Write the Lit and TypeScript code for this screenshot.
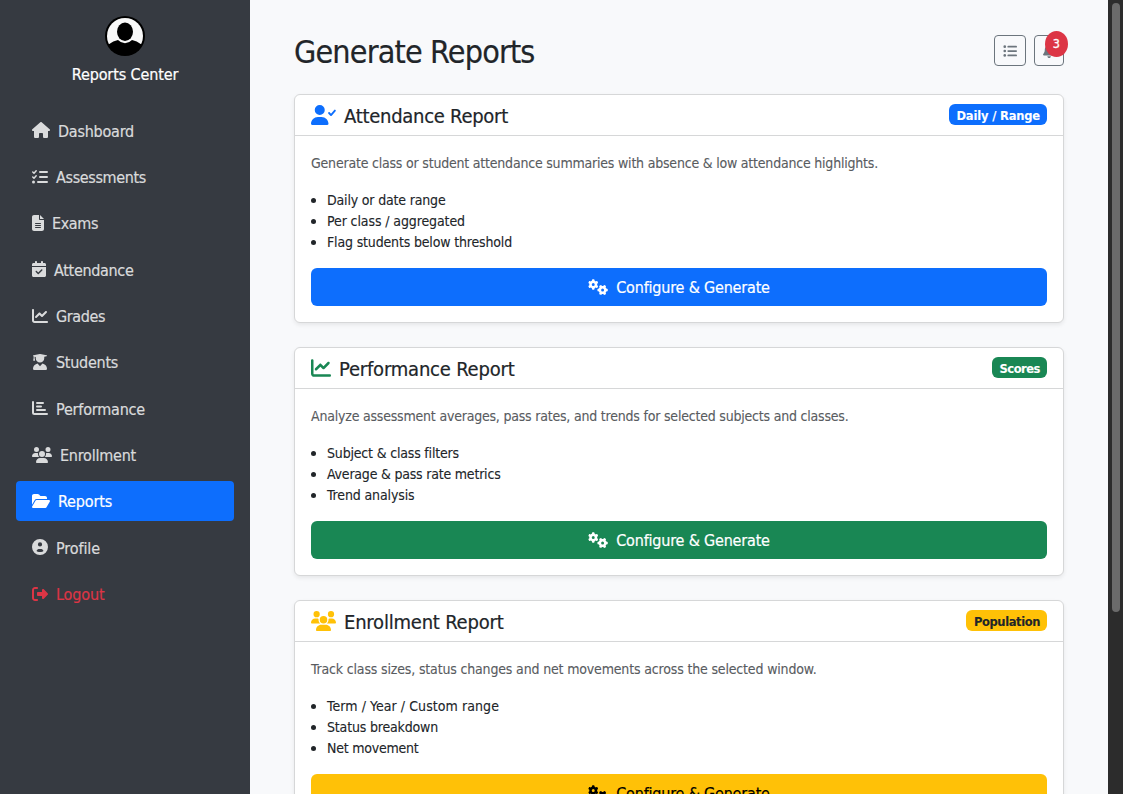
import { LitElement, html, css, svg } from "lit";
import { customElement, property } from "lit/decorators.js";

const GEAR =
  "M308.5 135.3c7.1-6.3 9.9-16.2 6.2-25c-2.3-5.3-4.8-10.5-7.6-15.5L304 89.4c-3-5-6.3-9.9-9.8-14.6c-5.7-7.6-15.7-10.1-24.7-7.1l-28.2 9.3c-10.7-8.8-23-16-36.2-20.9L199 27.1c-1.9-9.3-9.1-16.7-18.5-17.8C173.9 8.4 167.2 8 160.4 8h-.7c-6.8 0-13.5 .4-20.1 1.2c-9.4 1.1-16.6 8.6-18.5 17.8L115 56.1c-13.3 5-25.5 12.1-36.2 20.9L50.5 67.8c-9-3-19-.5-24.7 7.1c-3.5 4.7-6.8 9.6-9.9 14.6l-3 5.3c-2.8 5-5.3 10.2-7.6 15.6c-3.7 8.7-.9 18.6 6.2 25l22.2 19.8C32.6 161.9 32 168.9 32 176s.6 14.1 1.7 20.9L11.5 216.7c-7.1 6.3-9.9 16.2-6.2 25c2.3 5.3 4.8 10.5 7.6 15.6l3 5.2c3 5.1 6.3 9.9 9.9 14.6c5.7 7.6 15.7 10.1 24.7 7.1l28.2-9.3c10.7 8.8 23 16 36.2 20.9l6.1 29.1c1.9 9.3 9.1 16.7 18.5 17.8c6.7 .8 13.5 1.2 20.4 1.2s13.7-.4 20.4-1.2c9.4-1.1 16.6-8.6 18.5-17.8l6.1-29.1c13.3-5 25.5-12.1 36.2-20.9l28.2 9.3c9 3 19 .5 24.7-7.1c3.5-4.7 6.8-9.5 9.8-14.6l3.1-5.4c2.8-5 5.3-10.2 7.6-15.5c3.7-8.7 .9-18.6-6.2-25l-22.2-19.8c1.1-6.8 1.7-13.8 1.7-20.9s-.6-14.1-1.7-20.9l22.2-19.8zM112 176a48 48 0 1 1 96 0 48 48 0 1 1 -96 0z";

// Each icon: [viewBox width, shapes]; every viewBox is 512 units tall.
const ICONS: Record<string, [number, unknown]> = {
  house: [576, svg`<path d="M575.8 255.5c0 18-15 32.1-32 32.1h-32l.7 160.2c0 2.7-.2 5.4-.5 8.1V472c0 22.1-17.9 40-40 40H392c-22.1 0-40-17.9-40-40V384c0-17.7-14.3-32-32-32H256c-17.7 0-32 14.3-32 32v88c0 22.1-17.9 40-40 40H104c-22.1 0-40-17.9-40-40V287.6H32c-18 0-32-14-32-32.1c0-9 3-17 10-24L266.4 8c7-7 15-8 22-8s15 2 21 7L564.8 231.5c8 7 12 15 11 24z"/>`],
  tasks: [512, svg`<g fill="none" stroke="currentColor" stroke-linecap="round" stroke-linejoin="round"><path stroke-width="48" d="M24 96l40 38 70-78M24 256l40 38 70-78"/><path stroke-width="64" d="M256 96h224M256 256h224M192 416h288"/></g><circle cx="48" cy="416" r="48"/>`],
  file: [384, svg`<path d="M64 0C28.7 0 0 28.7 0 64V448c0 35.3 28.7 64 64 64H320c35.3 0 64-28.7 64-64V160H256c-17.7 0-32-14.3-32-32V0H64zM256 0V128H384L256 0zM112 256H272a16 16 0 0 1 0 32H112a16 16 0 0 1 0-32zm0 64H272a16 16 0 0 1 0 32H112a16 16 0 0 1 0-32zm0 64H272a16 16 0 0 1 0 32H112a16 16 0 0 1 0-32z" fill-rule="evenodd"/>`],
  calendar: [448, svg`<path d="M128 0c17.7 0 32 14.3 32 32V64H288V32c0-17.7 14.3-32 32-32s32 14.3 32 32V64h48c26.5 0 48 21.5 48 48v48H0V112C0 85.5 21.5 64 48 64H96V32c0-17.7 14.3-32 32-32zM0 192H448V464c0 26.5-21.5 48-48 48H48c-26.5 0-48-21.5-48-48V192zM329 305c9.4-9.4 9.4-24.6 0-33.9s-24.6-9.4-33.9 0l-95 95-47-47c-9.4-9.4-24.6-9.4-33.9 0s-9.4 24.6 0 33.9l64 64c9.4 9.4 24.6 9.4 33.9 0L329 305z"/>`],
  line: [512, svg`<path d="M64 64c0-17.7-14.3-32-32-32S0 46.3 0 64V400c0 44.2 35.8 80 80 80H480c17.7 0 32-14.3 32-32s-14.3-32-32-32H80c-8.8 0-16-7.2-16-16V64zm406.6 86.6c12.5-12.5 12.5-32.8 0-45.3s-32.8-12.5-45.3 0L320 210.7l-57.4-57.4c-12.5-12.5-32.8-12.5-45.3 0l-112 112c-12.5 12.5-12.5 32.8 0 45.3s32.8 12.5 45.3 0L240 221.3l57.4 57.4c12.5 12.5 32.8 12.5 45.3 0l128-128z"/>`],
  graduate: [512, svg`<path d="M246 2q10-3 20 0L464 40q18 5 18 16t-18 16l-72 16v48a136 136 0 0 1-272 0V92L84 84v44l14 70c2 8-3 14-10 14H48c-7 0-12-6-10-14l14-70V76q-22-6-22-18t20-18zM160 308q14-6 24 4l72 80 72-80q10-10 24-4c75 18 128 84 128 164q0 40-40 40H72q-40 0-40-40c0-80 53-146 128-164z"/>`],
  bars: [512, svg`<g fill="none" stroke="currentColor" stroke-width="64" stroke-linecap="round"><path d="M32 64v336q0 48 48 48h400" stroke-linejoin="round"/><path d="M160 96h192M160 208h128M160 320h256"/></g>`],
  users: [640, svg`<path d="M144 0a80 80 0 1 1 0 160A80 80 0 1 1 144 0zM512 0a80 80 0 1 1 0 160A80 80 0 1 1 512 0zM0 298.7C0 239.8 47.8 192 106.7 192h42.7c15.9 0 31 3.5 44.6 9.7c-1.3 7.2-1.9 14.7-1.9 22.3c0 38.2 16.8 72.5 43.3 96H21.3C9.6 320 0 310.4 0 298.7zM405.3 320c26.6-23.5 43.3-57.8 43.3-96c0-7.6-.7-15-1.9-22.3c13.6-6.3 28.7-9.7 44.6-9.7h42.7C592.2 192 640 239.8 640 298.7c0 11.8-9.6 21.3-21.3 21.3H405.3zM224 224a96 96 0 1 1 192 0 96 96 0 1 1 -192 0zM128 485.3C128 411.7 187.7 352 261.3 352H378.7C452.3 352 512 411.7 512 485.3c0 14.7-11.9 26.7-26.7 26.7H154.7c-14.7 0-26.7-11.9-26.7-26.7z"/>`],
  folder: [576, svg`<path d="M88.7 223.8L0 375.8V96C0 60.7 28.7 32 64 32H181.5c17 0 33.3 6.7 45.3 18.7l26.5 26.5c12 12 28.3 18.7 45.3 18.7H416c35.3 0 64 28.7 64 64v32H144c-22.8 0-43.8 12.1-55.3 31.8zm27.6 16.1C122.1 230 132.6 224 144 224H544c11.5 0 22 6.1 27.7 16.1s5.7 22.2-.1 32.1l-112 192C453.9 474 443.4 480 432 480H32c-11.5 0-22-6.1-27.7-16.1s-5.7-22.2 .1-32.1l112-192z"/>`],
  profile: [512, svg`<path fill-rule="evenodd" d="M0 256a256 256 0 1 1 512 0A256 256 0 1 1 0 256zm256-16a68 68 0 1 0 0-136 68 68 0 1 0 0 136zM256 416c54 0 90-12 110-34-12-42-50-62-90-62h-40c-40 0-78 20-90 62 20 22 56 34 110 34z"/>`],
  logout: [512, svg`<path d="M377.9 105.9L500.7 228.7c7.2 7.2 11.3 17.1 11.3 27.3s-4.1 20.1-11.3 27.3L377.9 406.1c-6.4 6.4-15 9.9-24 9.9c-18.7 0-33.9-15.2-33.9-33.9l0-62.1-128 0c-17.7 0-32-14.3-32-32l0-64c0-17.7 14.3-32 32-32l128 0 0-62.1c0-18.7 15.2-33.9 33.9-33.9c9 0 17.6 3.6 24 9.9zM160 96L96 96c-17.7 0-32 14.3-32 32l0 256c0 17.7 14.3 32 32 32l64 0c17.7 0 32 14.3 32 32s-14.3 32-32 32l-64 0c-53 0-96-43-96-96L0 128C0 75 43 32 96 32l64 0c17.7 0 32 14.3 32 32s-14.3 32-32 32z"/>`],
  usercheck: [640, svg`<path d="M96 128a128 128 0 1 1 256 0A128 128 0 1 1 96 128zM0 482.3C0 383.8 79.8 304 178.3 304h91.4C368.2 304 448 383.8 448 482.3c0 16.4-13.3 29.7-29.7 29.7H29.7C13.3 512 0 498.7 0 482.3z"/><path d="M462 205l50 52 100-114" fill="none" stroke="currentColor" stroke-width="48" stroke-linecap="round" stroke-linejoin="round"/>`],
  gears: [640, svg`<g transform="translate(10 0) scale(.985 1)"><path d=${GEAR}/><path d=${GEAR} transform="translate(464 352) rotate(90) translate(-160 -176)"/></g>`],
  list: [512, svg`<circle cx="64" cy="96" r="48"/><circle cx="64" cy="256" r="48"/><circle cx="64" cy="416" r="48"/><path d="M192 96h288M192 256h288M192 416h288" stroke="currentColor" stroke-width="64" stroke-linecap="round"/>`],
  bell: [448, svg`<path d="M224 0c-17.7 0-32 14.3-32 32V51.2C119 66 64 130.6 64 208v18.8c0 47-17.3 92.4-48.5 127.6l-7.4 8.3c-8.4 9.4-10.4 22.9-5.3 34.4S19.4 416 32 416H416c12.600 0 24-7.400 29.200-18.900s3.100-25-5.300-34.400l-7.400-8.300C401.300 319.200 384 273.900 384 226.800V208c0-77.400-55-142-128-156.800V32c0-17.700-14.300-32-32-32zm45.300 493.300c12-12 18.700-28.300 18.700-45.300H160c0 17 6.700 33.300 18.700 45.300s28.300 18.700 45.300 18.700s33.300-6.700 45.300-18.700z"/>`],
};

@customElement("ui-icon")
class UiIcon extends LitElement {
  @property() name = "house";
  static styles = css`
    :host { display: inline-block; line-height: 0; flex: none; }
    svg { display: block; height: 1em; fill: currentColor; overflow: visible; }
  `;
  render() {
    const [w, shapes] = ICONS[this.name];
    return html`<svg viewBox="0 0 ${w} 512" style="width:${w / 512}em">${shapes}</svg>`;
  }
}

// Text tracked to occupy an exact advance width.
@customElement("fit-text")
class FitText extends LitElement {
  @property() text = "";
  @property({ type: Number }) w = 0;
  static styles = css`
    :host { display: inline-block; white-space: nowrap; }
    .t { display: inline-block; white-space: nowrap; }
  `;
  render() {
    return html`<span class="t">${this.text}</span>`;
  }
  firstUpdated() {
    const t = this.renderRoot.querySelector(".t") as HTMLElement;
    const natural = t.getBoundingClientRect().width;
    if (natural && this.w) t.style.letterSpacing = `${(this.w - natural) / this.text.length}px`;
  }
}

const NAV: [string, string, number, string][] = [
  ["house", "Dashboard", 76, ""],
  ["tasks", "Assessments", 90, ""],
  ["file", "Exams", 46, ""],
  ["calendar", "Attendance", 79.5, ""],
  ["line", "Grades", 49, ""],
  ["graduate", "Students", 62, ""],
  ["bars", "Performance", 89, ""],
  ["users", "Enrollment", 76, ""],
  ["folder", "Reports", 54, "active"],
  ["profile", "Profile", 44, ""],
  ["logout", "Logout", 48.5, "danger"],
];

interface Report {
  tone: string; icon: string; title: [string, number]; badge: [string, number];
  desc: [string, number]; items: [string, number][];
}

const REPORTS: Report[] = [
  {
    tone: "primary", icon: "usercheck", title: ["Attendance Report", 164], badge: ["Daily / Range", 83.5],
    desc: ["Generate class or student attendance summaries with absence & low attendance highlights.", 567],
    items: [["Daily or date range", 118.5], ["Per class / aggregated", 138], ["Flag students below threshold", 185]],
  },
  {
    tone: "success", icon: "line", title: ["Performance Report", 175.5], badge: ["Scores", 40.5],
    desc: ["Analyze assessment averages, pass rates, and trends for selected subjects and classes.", 537.5],
    items: [["Subject & class filters", 132], ["Average & pass rate metrics", 173.5], ["Trend analysis", 87.5]],
  },
  {
    tone: "warning", icon: "users", title: ["Enrollment Report", 159.5], badge: ["Population", 66],
    desc: ["Track class sizes, status changes and net movements across the selected window.", 505.5],
    items: [["Term / Year / Custom range", 172], ["Status breakdown", 111], ["Net movement", 91.5]],
  },
];

@customElement("app-root")
class AppRoot extends LitElement {
  static styles = css`
    :host {
      display: flex; width: 100%; height: 100vh; overflow: hidden; background: #f8f9fb; color: #212529;
      font: 16px/1.5 "DejaVu Sans Condensed", "DejaVu Sans", sans-serif;
      font-stretch: condensed;
      -webkit-text-stroke: .2px currentColor;
    }
    * { box-sizing: border-box; }
    .sidebar { width: 250px; flex: none; background: #363a41; padding: 16px; color: #fff; }
    .brand { display: flex; flex-direction: column; align-items: center; gap: 7px; height: 94.4px; }
    .avatar { width: 40px; height: 40px; display: block; }
    .nav { display: flex; flex-direction: column; gap: 6.35px; }
    .link { display: flex; align-items: center; gap: 8px; height: 40px; padding: 0 16px; border-radius: 4px; color: #dadbdc; }
    .link fit-text { padding-top: 2.400px; }
    .h5 fit-text { padding-top: 2px; }
    .link.active { background: #0d6efd; color: #fff; }
    .link.danger { color: #dc3545; }
    .main { flex: 1; min-width: 0; padding: 32px 44px 0; overflow: hidden; }
    .top { display: flex; justify-content: space-between; align-items: flex-start; height: 62px; }
    .title { margin: 0; padding-top: 1px; font-size: 32px; font-weight: 400; line-height: 38.4px; }
    .tools { display: flex; gap: 8px; padding-top: 3px; }
    .tool { position: relative; height: 31px; border: 1px solid #6c757d; border-radius: 4px; padding: 0 8px; display: flex; align-items: center; font-size: 14px; color: #6c757d; }
    .count { position: absolute; left: 10px; top: -5px; width: 23px; height: 26px; padding-top: 1px; border-radius: 50%; background: #dc3545; color: #fff; font-size: 12.500px; -webkit-text-stroke: .3px #fff; display: flex; align-items: center; justify-content: center; }
    .card { background: #fff; border: 1px solid #d6d7d8; border-radius: 6px; box-shadow: 0 2px 4px rgba(0,0,0,.075); margin-bottom: 24px; }
    .head { display: flex; align-items: center; justify-content: space-between; height: 41px; padding: 0 16px; border-bottom: 1px solid #d6d7d8; }
    .h5 { display: flex; align-items: center; gap: 8px; margin: 0; font-size: 20px; font-weight: 400; line-height: 24px; }
    .badge { font-family: "DejaVu Sans"; font-stretch: normal; font-size: 11.500px; font-weight: 700; line-height: 21px; height: 21px; padding: 2px 7px 0 7.500px; border-radius: 6px; color: #fff; margin-bottom: 2px; -webkit-text-stroke: .1px currentColor; }
    .badge.bg-warning { padding-left: 8px; }
    .body { padding: 16px; font-size: 14px; line-height: 21px; -webkit-text-stroke: .1px currentColor; }
    .desc { margin: 0 0 16px; height: 21px; padding-top: 1px; color: #595c5f; }
    .items { margin: 0 0 16px; padding: 0; list-style: none; }
    .item { display: flex; align-items: center; gap: 11px; height: 21px; }
    .item fit-text { padding-top: 2px; }
    .item::before { content: ""; width: 5px; height: 5px; border-radius: 50%; background: #212529; margin-top: 1px; }
    .btn { display: flex; align-items: center; justify-content: center; gap: 8px; height: 38px; border-radius: 6px; font-size: 16px; color: #fff; -webkit-text-stroke: .2px currentColor; }
    .icon-primary { color: #0d6efd; } .icon-success { color: #198754; } .icon-warning { color: #ffc107; }
    .bg-primary { background: #0d6efd; } .bg-success { background: #198754; }
    .bg-warning { background: #ffc107; color: #212529; }
    .btn.bg-warning { color: #000; }
    .scroll { width: 15px; flex: none; background: #2c2c2c; padding: 3px 3px 0 4px; }
    .thumb { height: 609px; border-radius: 4px; background: #6b6b6b; }
  `;

  render() {
    return html`
      <aside class="sidebar">
        <div class="brand">
          <svg class="avatar" viewBox="0 0 40 40">
            <defs><clipPath id="c"><circle cx="20" cy="20" r="19"/></clipPath></defs>
            <circle cx="20" cy="20" r="20" fill="#000"/>
            <circle cx="20" cy="20" r="18" fill="#f8f8f8"/>
            <path clip-path="url(#c)" d="M0 31L4.300 28Q8 25.200 13 24Q16 27.200 20 27.200Q24 27.200 27 24Q32 25.200 35.700 28L40 31V40H0z"/>
            <ellipse cx="20" cy="15.700" rx="8" ry="9.200"/>
          </svg>
          <fit-text text="Reports Center" w="106.500"></fit-text>
        </div>
        <nav class="nav">
          ${NAV.map(([icon, text, w, cls]) => html`
            <a class="link ${cls}"><ui-icon name=${icon}></ui-icon><fit-text text=${text} w=${w}></fit-text></a>`)}
        </nav>
      </aside>
      <main class="main">
        <div class="top">
          <h1 class="title"><fit-text text="Generate Reports" w="240.500"></fit-text></h1>
          <div class="tools">
            <div class="tool"><ui-icon name="list"></ui-icon></div>
            <div class="tool"><ui-icon name="bell"></ui-icon><span class="count">3</span></div>
          </div>
        </div>
        ${REPORTS.map((r) => html`
          <section class="card">
            <div class="head">
              <h5 class="h5"><ui-icon class="icon-${r.tone}" name=${r.icon}></ui-icon><fit-text text=${r.title[0]} w=${r.title[1]}></fit-text></h5>
              <span class="badge bg-${r.tone}"><fit-text text=${r.badge[0]} w=${r.badge[1]}></fit-text></span>
            </div>
            <div class="body">
              <p class="desc"><fit-text text=${r.desc[0]} w=${r.desc[1]}></fit-text></p>
              <ul class="items">${r.items.map(([t, w]) => html`<li class="item"><fit-text text=${t} w=${w}></fit-text></li>`)}</ul>
              <div class="btn bg-${r.tone}"><ui-icon name="gears"></ui-icon><fit-text text="Configure &amp; Generate" w="153.500"></fit-text></div>
            </div>
          </section>`)}
      </main>
      <div class="scroll"><div class="thumb"></div></div>
    `;
  }
}
